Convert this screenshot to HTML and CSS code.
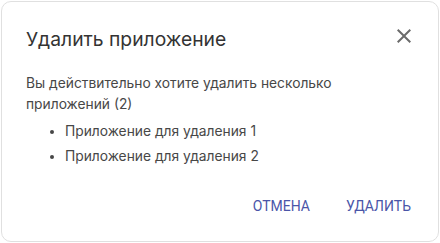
FILE: index.html
```html
<!DOCTYPE html>
<html lang="ru">
<head>
    <meta charset="UTF-8">
    <title>Удалить приложение</title>
    <link rel="stylesheet" href="styles.css">
</head>
<body>
    <div class="dialog">
        <div class="dialog-header">
            <h2 class="dialog-title">Удалить приложение</h2>
            <button class="close-btn" aria-label="Закрыть">
                <svg width="24" height="24" viewBox="0 0 24 24">
                    <path d="M19 6.41L17.59 5 12 10.59 6.41 5 5 6.41 10.59 12 5 17.59 6.41 19 12 13.41 17.59 19 19 17.59 13.41 12z" fill="currentColor"/>
                </svg>
            </button>
        </div>
        <div class="dialog-content">
            <p>Вы действительно хотите удалить несколько приложений (2)</p>
            <ul class="app-list">
                <li>Приложение для удаления 1</li>
                <li>Приложение для удаления 2</li>
            </ul>
        </div>
        <div class="dialog-actions">
            <button class="text-btn">Отмена</button>
            <button class="text-btn">Удалить</button>
        </div>
    </div>
</body>
</html>
```

FILE: styles.css
```css
* {
    margin: 0;
    padding: 0;
    box-sizing: border-box;
    font-family: Inter, 'Noto Sans', sans-serif;
}
body {
    background-color: #fff;
    padding: 1px;
}
.dialog {
    width: 438px;
    height: 241px;
    background-color: #fff;
    border: 1px solid #e0e0e0;
    border-radius: 10px;
    padding: 0 24px;
}
.dialog-header {
    display: flex;
    justify-content: space-between;
    align-items: flex-start;
    padding-top: 24px;
}
.dialog-title {
    font-size: 19.3px;
    font-weight: 400;
    line-height: 26px;
    color: #333;
}
.close-btn {
    background: none;
    border: none;
    color: #6b6b6b;
    width: 24px;
    height: 24px;
    margin-top: -2px;
    margin-right: -2px;
    cursor: pointer;
}
.close-btn svg {
    display: block;
}
.dialog-content {
    padding-top: 21px;
    font-size: 13.8px;
    line-height: 21px;
    color: #474747;
}
.app-list {
    padding-left: 39px;
    margin-top: 4px;
}
.app-list li {
    line-height: 25px;
}
.dialog-actions {
    display: flex;
    justify-content: flex-end;
    gap: 16px;
    margin-top: 21px;
    margin-right: -7px;
}
.text-btn {
    background: none;
    border: none;
    color: #4a55a8;
    font-family: Roboto, sans-serif;
    font-size: 14px;
    font-weight: 400;
    text-transform: uppercase;
    padding: 8px 10px;
    border-radius: 4px;
    cursor: pointer;
}
```
